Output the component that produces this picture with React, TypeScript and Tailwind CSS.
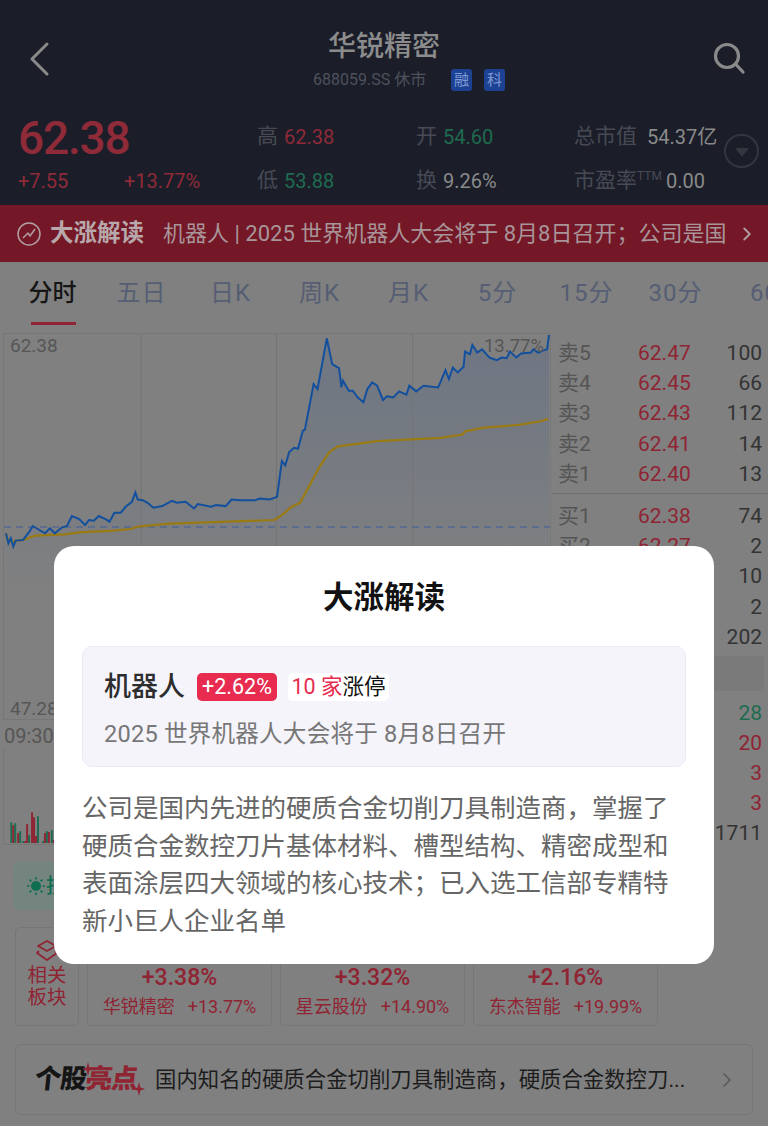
import { ChevronRight } from "lucide-react";

const BLUE_LINE =
  "10,610 15,640 20,625 25,650 30,632 45,630 58,605 65,588 75,597 90,610 100,595 110,610 125,592 135,588 145,558 160,567 172,585 180,570 190,572 200,558 215,568 222,575 232,548 245,548 255,530 268,515 275,487 280,508 290,510 300,518 312,533 330,528 350,512 360,518 378,515 395,535 403,522 430,530 440,525 460,528 472,508 490,510 520,510 530,505 550,508 565,500 575,392 582,405 590,365 600,352 608,355 618,300 622,298 640,160 648,175 667,22 678,100 692,112 697,170 700,150 712,180 720,180 730,200 742,215 750,175 760,155 770,165 782,208 790,197 803,200 815,182 830,192 836,165 850,182 865,165 895,170 910,118 917,145 925,110 935,125 947,108 950,62 960,70 965,42 975,65 985,55 1000,80 1015,88 1025,80 1035,82 1042,62 1055,80 1065,68 1085,65 1090,55 1100,66 1108,60 1118,55 1122,12";

const GOLD_LINE =
  "10,610 15,635 45,630 70,617 130,613 160,607 230,602 265,597 280,590 345,581 560,570 575,555 595,530 612,518 630,470 650,415 672,365 690,348 770,332 900,322 945,312 950,303 985,292 1060,283 1105,272 1120,265";

const ASKS = [
  ["卖5", "62.47", "100"],
  ["卖4", "62.45", "66"],
  ["卖3", "62.43", "112"],
  ["卖2", "62.41", "14"],
  ["卖1", "62.40", "13"],
];

const BIDS = [
  ["买1", "62.38", "74"],
  ["买2", "62.27", "2"],
  ["买3", "62.26", "10"],
  ["买4", "62.25", "2"],
  ["买5", "62.24", "202"],
];

const TICKS = [
  ["28", "text-[#1f6b50]"],
  ["20", "text-[#8f2433]"],
  ["3", "text-[#8f2433]"],
  ["3", "text-[#8f2433]"],
  ["1711", "text-[#333333]"],
];

const TABS = ["分时", "五日", "日K", "周K", "月K", "5分", "15分", "30分", "60"];

const VOLUME: [number, number, string][] = [
  [7, 21, "#1f6b50"], [9, 18, "#8f2433"], [11, 20, "#1f6b50"], [14, 10, "#8f2433"], [16, 12, "#1f6b50"],
  [19, 2, "#1f6b50"], [21, 2, "#8f2433"], [23, 19, "#8f2433"], [25, 8, "#1f6b50"], [28, 31, "#8f2433"],
  [30, 26, "#8f2433"], [32, 7, "#8f2433"], [34, 27, "#1f6b50"], [39, 2, "#1f6b50"], [41, 10, "#8f2433"],
  [43, 12, "#1f6b50"], [45, 11, "#8f2433"], [48, 13, "#1f6b50"], [50, 3, "#8f2433"], [52, 10, "#8f2433"],
];

const SECTORS = [
  ["+3.38%", "华锐精密", "+13.77%"],
  ["+3.32%", "星云股份", "+14.90%"],
  ["+2.16%", "东杰智能", "+19.99%"],
];

function BookRow({ row }: { row: string[] }) {
  return (
    <div className="flex h-[30.4px] items-center pl-[6px] pr-[6px] text-[21px] leading-none">
      <span className="w-[80px] text-[#555555]">{row[0]}</span>
      <span className="text-[#8f2433]">{row[1]}</span>
      <span className="ml-auto text-[#333333]">{row[2]}</span>
    </div>
  );
}

function Stat({ label, value, color }: { label: string; value: string; color: string }) {
  return (
    <div className="flex items-center gap-[6px]">
      <span className="text-[21px] leading-none text-[#474a54]">{label}</span>
      <span className={`text-[20px] leading-none ${color}`}>{value}</span>
    </div>
  );
}

function Sparkle({ className }: { className: string }) {
  return (
    <svg className={className} width="12" height="14" viewBox="0 0 12 14" fill="#8f2433">
      <path d="M6 0 L7.4 5.6 L12 7 L7.4 8.4 L6 14 L4.6 8.4 L0 7 L4.6 5.6 Z" />
    </svg>
  );
}

export default function App() {
  return (
    <div className="relative h-[1126px] w-[768px] overflow-hidden bg-[#808080] font-['Roboto','Noto_Sans_CJK_SC',sans-serif]">
      {/* top bar */}
      <header className="h-[205px] bg-[#1b1e29]">
        <div className="relative flex h-[116px] flex-col items-center pt-[30px]">
          <svg className="absolute left-[28px] top-[41px]" width="24" height="36" viewBox="0 0 24 36" fill="none">
            <path d="M19 3 L4 18 L19 33" stroke="#8a8a8a" strokeWidth="3" strokeLinecap="round" strokeLinejoin="round" />
          </svg>
          <svg className="absolute left-[712px] top-[42px]" width="34" height="33" viewBox="0 0 34 33" fill="none" stroke="#8a8a8a" strokeWidth="3.2" strokeLinecap="round">
            <circle cx="15" cy="14" r="11.5" />
            <path d="M23.5 22 L31 30" />
          </svg>
          <h1 className="text-[28px] font-medium leading-[34px] text-[#8c8c8c]">华锐精密</h1>
          <div className="mt-[5px] flex h-[22px] items-center pl-[50px]">
            <span className="w-[138px] text-[16px] leading-none text-[#4d515c]">688059.SS 休市</span>
            <span className="flex h-[22px] w-[21px] items-center justify-center rounded-[3px] bg-[#1d4293] text-[15px] text-[#7f9ad6]">融</span>
            <span className="ml-[12px] flex h-[22px] w-[21px] items-center justify-center rounded-[3px] bg-[#1d4293] text-[15px] text-[#7f9ad6]">科</span>
          </div>
        </div>
        <div className="relative flex">
          <div className="w-[257px] pl-[18px]">
            <div className="text-[46px] font-medium leading-[44px] tracking-[-1.2px] text-[#8f2a38]">62.38</div>
            <div className="mt-[11px] flex text-[20px] leading-none text-[#8f2a38]">
              <span className="w-[106px]">+7.55</span>
              <span>+13.77%</span>
            </div>
          </div>
          <div className="flex w-[159px] flex-col gap-[23px] pt-[10px]">
            <Stat label="高" value="62.38" color="text-[#8f2a38]" />
            <Stat label="低" value="53.88" color="text-[#1f6b50]" />
          </div>
          <div className="flex w-[158px] flex-col gap-[23px] pt-[10px]">
            <Stat label="开" value="54.60" color="text-[#1f6b50]" />
            <Stat label="换" value="9.26%" color="text-[#8a8a8a]" />
          </div>
          <div className="flex flex-col gap-[23px] pt-[10px]">
            <div className="flex items-center">
              <span className="w-[73px] text-[21px] leading-none text-[#474a54]">总市值</span>
              <span className="text-[20px] leading-none text-[#8a8a8a]">54.37亿</span>
            </div>
            <div className="flex items-center">
              <span className="text-[21px] leading-none text-[#474a54]">市盈率</span>
              <span className="-mt-[10px] w-[29px] text-[12px] leading-none text-[#474a54]">TTM</span>
              <span className="text-[20px] leading-none text-[#8a8a8a]">0.00</span>
            </div>
          </div>
          <div className="absolute left-[724px] top-[18px] flex h-[34px] w-[35px] items-center justify-center rounded-full border-2 border-[#33363f]">
            <div className="mt-[2px] h-0 w-0 border-x-[7px] border-t-[9px] border-x-transparent border-t-[#33363f]" />
          </div>
        </div>
      </header>

      {/* banner */}
      <div className="flex h-[57px] items-center bg-[#741827] pl-[17px]">
        <svg width="24" height="24" viewBox="0 0 24 24" fill="none" stroke="#b09ea2" strokeWidth="1.5">
          <circle cx="12" cy="12" r="11" />
          <path d="M6 16 L11 11 L13 14 L18 7" strokeLinejoin="round" />
        </svg>
        <span className="ml-[9px] w-[113px] text-[23.5px] font-bold leading-none text-[#b8a8ab]">大涨解读</span>
        <span className="w-[575px] whitespace-nowrap text-[22px] leading-none text-[#a8959a]">机器人 | 2025 世界机器人大会将于 8月8日召开；公司是国</span>
        <ChevronRight className="-ml-[2px] text-[#b09ea2]" size={22} />
      </div>

      {/* tabs */}
      <nav className="flex h-[63px] overflow-hidden pl-[8px]">
        {TABS.map((tab, i) => (
          <div key={tab} className="relative flex h-full w-[89px] shrink-0 items-center justify-center pb-[1px]">
            <span className={i === 0 ? "whitespace-nowrap text-[24px] font-medium text-[#161616]" : "whitespace-nowrap text-[24px] tracking-[1px] text-[#565e74]"}>
              {tab}
            </span>
            {i === 0 && <div className="absolute bottom-0 left-[23px] h-[3px] w-[45px] bg-[#8f2433]" />}
          </div>
        ))}
      </nav>

      {/* chart + order book */}
      <div className="flex h-[520px]">
        <div className="w-[552px] pl-[3px] pt-[8px]">
          <div className="relative h-[387px] w-[548px] border border-[#777777]">
            <svg className="h-full w-full" viewBox="6 9 1118 1161" preserveAspectRatio="none">
              <defs>
                <linearGradient id="area" x1="0" y1="9" x2="0" y2="800" gradientUnits="userSpaceOnUse">
                  <stop offset="0" stopColor="#6e7683" />
                  <stop offset="1" stopColor="#808080" />
                </linearGradient>
              </defs>
              <polygon points={`10,1170 ${BLUE_LINE} 1122,1170`} fill="url(#area)" />
              <path d="M287 9 V1170 M564 9 V1170 M843 9 V1170" stroke="#747474" strokeWidth="1" vectorEffect="non-scaling-stroke" />
              <path d="M6 591 H1124" stroke="#3f5f99" strokeWidth="1.2" strokeDasharray="7 5" vectorEffect="non-scaling-stroke" />
              <polyline points={GOLD_LINE} fill="none" stroke="#9a7a12" strokeWidth="2.2" vectorEffect="non-scaling-stroke" />
              <polyline points={BLUE_LINE} fill="none" stroke="#12509e" strokeWidth="2" vectorEffect="non-scaling-stroke" />
            </svg>
            <span className="absolute left-[6px] top-0 text-[19px] leading-[24px] text-[#565656]">62.38</span>
            <span className="absolute right-[6px] top-0 text-[18.5px] leading-[24px] text-[#565656]">13.77%</span>
            <span className="absolute bottom-[-2px] left-[6px] text-[19px] leading-[24px] text-[#565656]">47.28</span>
          </div>
          <div className="flex h-[28px] items-center pl-[1px] pt-[3px] text-[20px] text-[#565656]">09:30</div>
          <svg className="block border-b border-l border-[#777777]" width="548" height="97" viewBox="0 0 548 97">
            {VOLUME.map(([x, h, c]) => (
              <rect key={x} x={x - 3} y={96 - h} width="2" height={h} fill={c} />
            ))}
          </svg>
        </div>
        <div className="w-[216px] pt-[13px]">
          {ASKS.map((row) => (
            <BookRow key={row[0]} row={row} />
          ))}
          <div className="mb-[7px] mt-[3px] h-px bg-[#6f6f6f]" />
          {BIDS.map((row) => (
            <BookRow key={row[0]} row={row} />
          ))}
          <div className="mt-[3px] h-[35px] w-[212px] bg-[#7a7a7a]" />
          <div className="pt-[7px]">
            {TICKS.map(([value, color], i) => (
              <div key={i} className={`flex h-[30.2px] items-center justify-end pr-[6px] text-[21px] leading-none ${color}`}>
                {value}
              </div>
            ))}
          </div>
        </div>
      </div>

      {/* news chip */}
      <div className="ml-[13px] mt-[17px] flex h-[48px] w-[300px] items-center rounded-[6px] bg-[#74857f] pl-[14px]">
        <svg width="18" height="18" viewBox="0 0 18 18" fill="#0f6e52">
          <circle cx="9" cy="9" r="5" />
          <path d="M9 0 V2.5 M9 15.5 V18 M0 9 H2.5 M15.5 9 H18 M2.6 2.6 L4.4 4.4 M13.6 13.6 L15.4 15.4 M2.6 15.4 L4.4 13.6 M13.6 4.4 L15.4 2.6" stroke="#0f6e52" strokeWidth="1.6" />
        </svg>
        <span className="ml-[1px] text-[20px] font-medium text-[#0f6e52]">技术</span>
      </div>

      {/* related sectors */}
      <div className="ml-[15px] mt-[17px] flex h-[99px] gap-[8px]">
        <div className="flex w-[64px] flex-col items-center rounded-[5px] border border-[#767676] pt-[12px] text-[#8f2433]">
          <svg width="24" height="22" viewBox="0 0 24 22" fill="none" stroke="#8f2433" strokeWidth="1.8" strokeLinejoin="round">
            <path d="M12 1 L21 6 L12 11 L3 6 Z" />
            <path d="M4 11 L2 13 L12 20 L22 13 L20 11" />
          </svg>
          <span className="mt-[3px] text-[19.5px] leading-[22px]">相关</span>
          <span className="text-[19.5px] leading-[22px]">板块</span>
        </div>
        {SECTORS.map(([rate, name, change]) => (
          <div key={name} className="flex w-[185px] flex-col items-center rounded-[5px] border border-[#767676] pt-[37px] text-[#8f2433]">
            <span className="text-[23px] font-medium leading-[26px]">{rate}</span>
            <div className="mt-[4px] flex gap-[13px] text-[18px] leading-[24px]">
              <span>{name}</span>
              <span>{change}</span>
            </div>
          </div>
        ))}
      </div>

      {/* stock highlight */}
      <div className="relative ml-[15px] mt-[18px] flex h-[71px] w-[738px] items-center rounded-[5px] border border-[#767676] pl-[19px]">
        <span className="w-[120px] -skew-x-6 text-[26.5px] font-black leading-none tracking-[-1px] text-[#151515]">
          个股<span className="text-[#8f2433]">亮点</span>
        </span>
        <Sparkle className="absolute left-[66px] top-[17px]" />
        <Sparkle className="absolute left-[117px] top-[37px]" />
        <span className="whitespace-nowrap text-[21.4px] leading-none text-[#1d1d1d]">国内知名的硬质合金切削刀具制造商，硬质合金数控刀...</span>
        <ChevronRight className="absolute right-[13px] top-[23px] text-[#585858]" size={24} strokeWidth={1.6} />
      </div>

      {/* dialog */}
      <div className="absolute left-[54px] top-[546px] h-[418px] w-[660px] rounded-[20px] bg-white px-[28px] pt-[32px]">
        <h2 className="text-center text-[30.5px] font-bold leading-[40px] text-[#111111]">大涨解读</h2>
        <div className="mt-[28px] h-[121px] rounded-[10px] border border-[#ebe9f2] bg-[#f5f4fb] pl-[21px] pt-[26px]">
          <div className="flex h-[28px] items-center">
            <span className="text-[27px] font-medium leading-none text-[#2d2d2d]">机器人</span>
            <span className="ml-[12px] flex h-[28px] w-[80px] items-center justify-center rounded-[5px] bg-[#e72c4f] text-[21.5px] leading-none text-white">+2.62%</span>
            <span className="ml-[11px] flex h-[28px] w-[101px] items-center justify-center rounded-[5px] bg-white text-[21.5px] leading-none text-[#111111]">
              <span className="text-[#e72c4f]">10 家</span>涨停
            </span>
          </div>
          <p className="mt-[19px] text-[23.6px] leading-[28px] tracking-[0.2px] text-[#777777]">2025 世界机器人大会将于 8月8日召开</p>
        </div>
        <p className="mt-[23px] text-[25.5px] leading-[37.7px] text-[#666666]">
          <span className="block">公司是国内先进的硬质合金切削刀具制造商，掌握了</span>
          <span className="block">硬质合金数控刀片基体材料、槽型结构、精密成型和</span>
          <span className="block">表面涂层四大领域的核心技术；已入选工信部专精特</span>
          <span className="block">新小巨人企业名单</span>
        </p>
      </div>
    </div>
  );
}
